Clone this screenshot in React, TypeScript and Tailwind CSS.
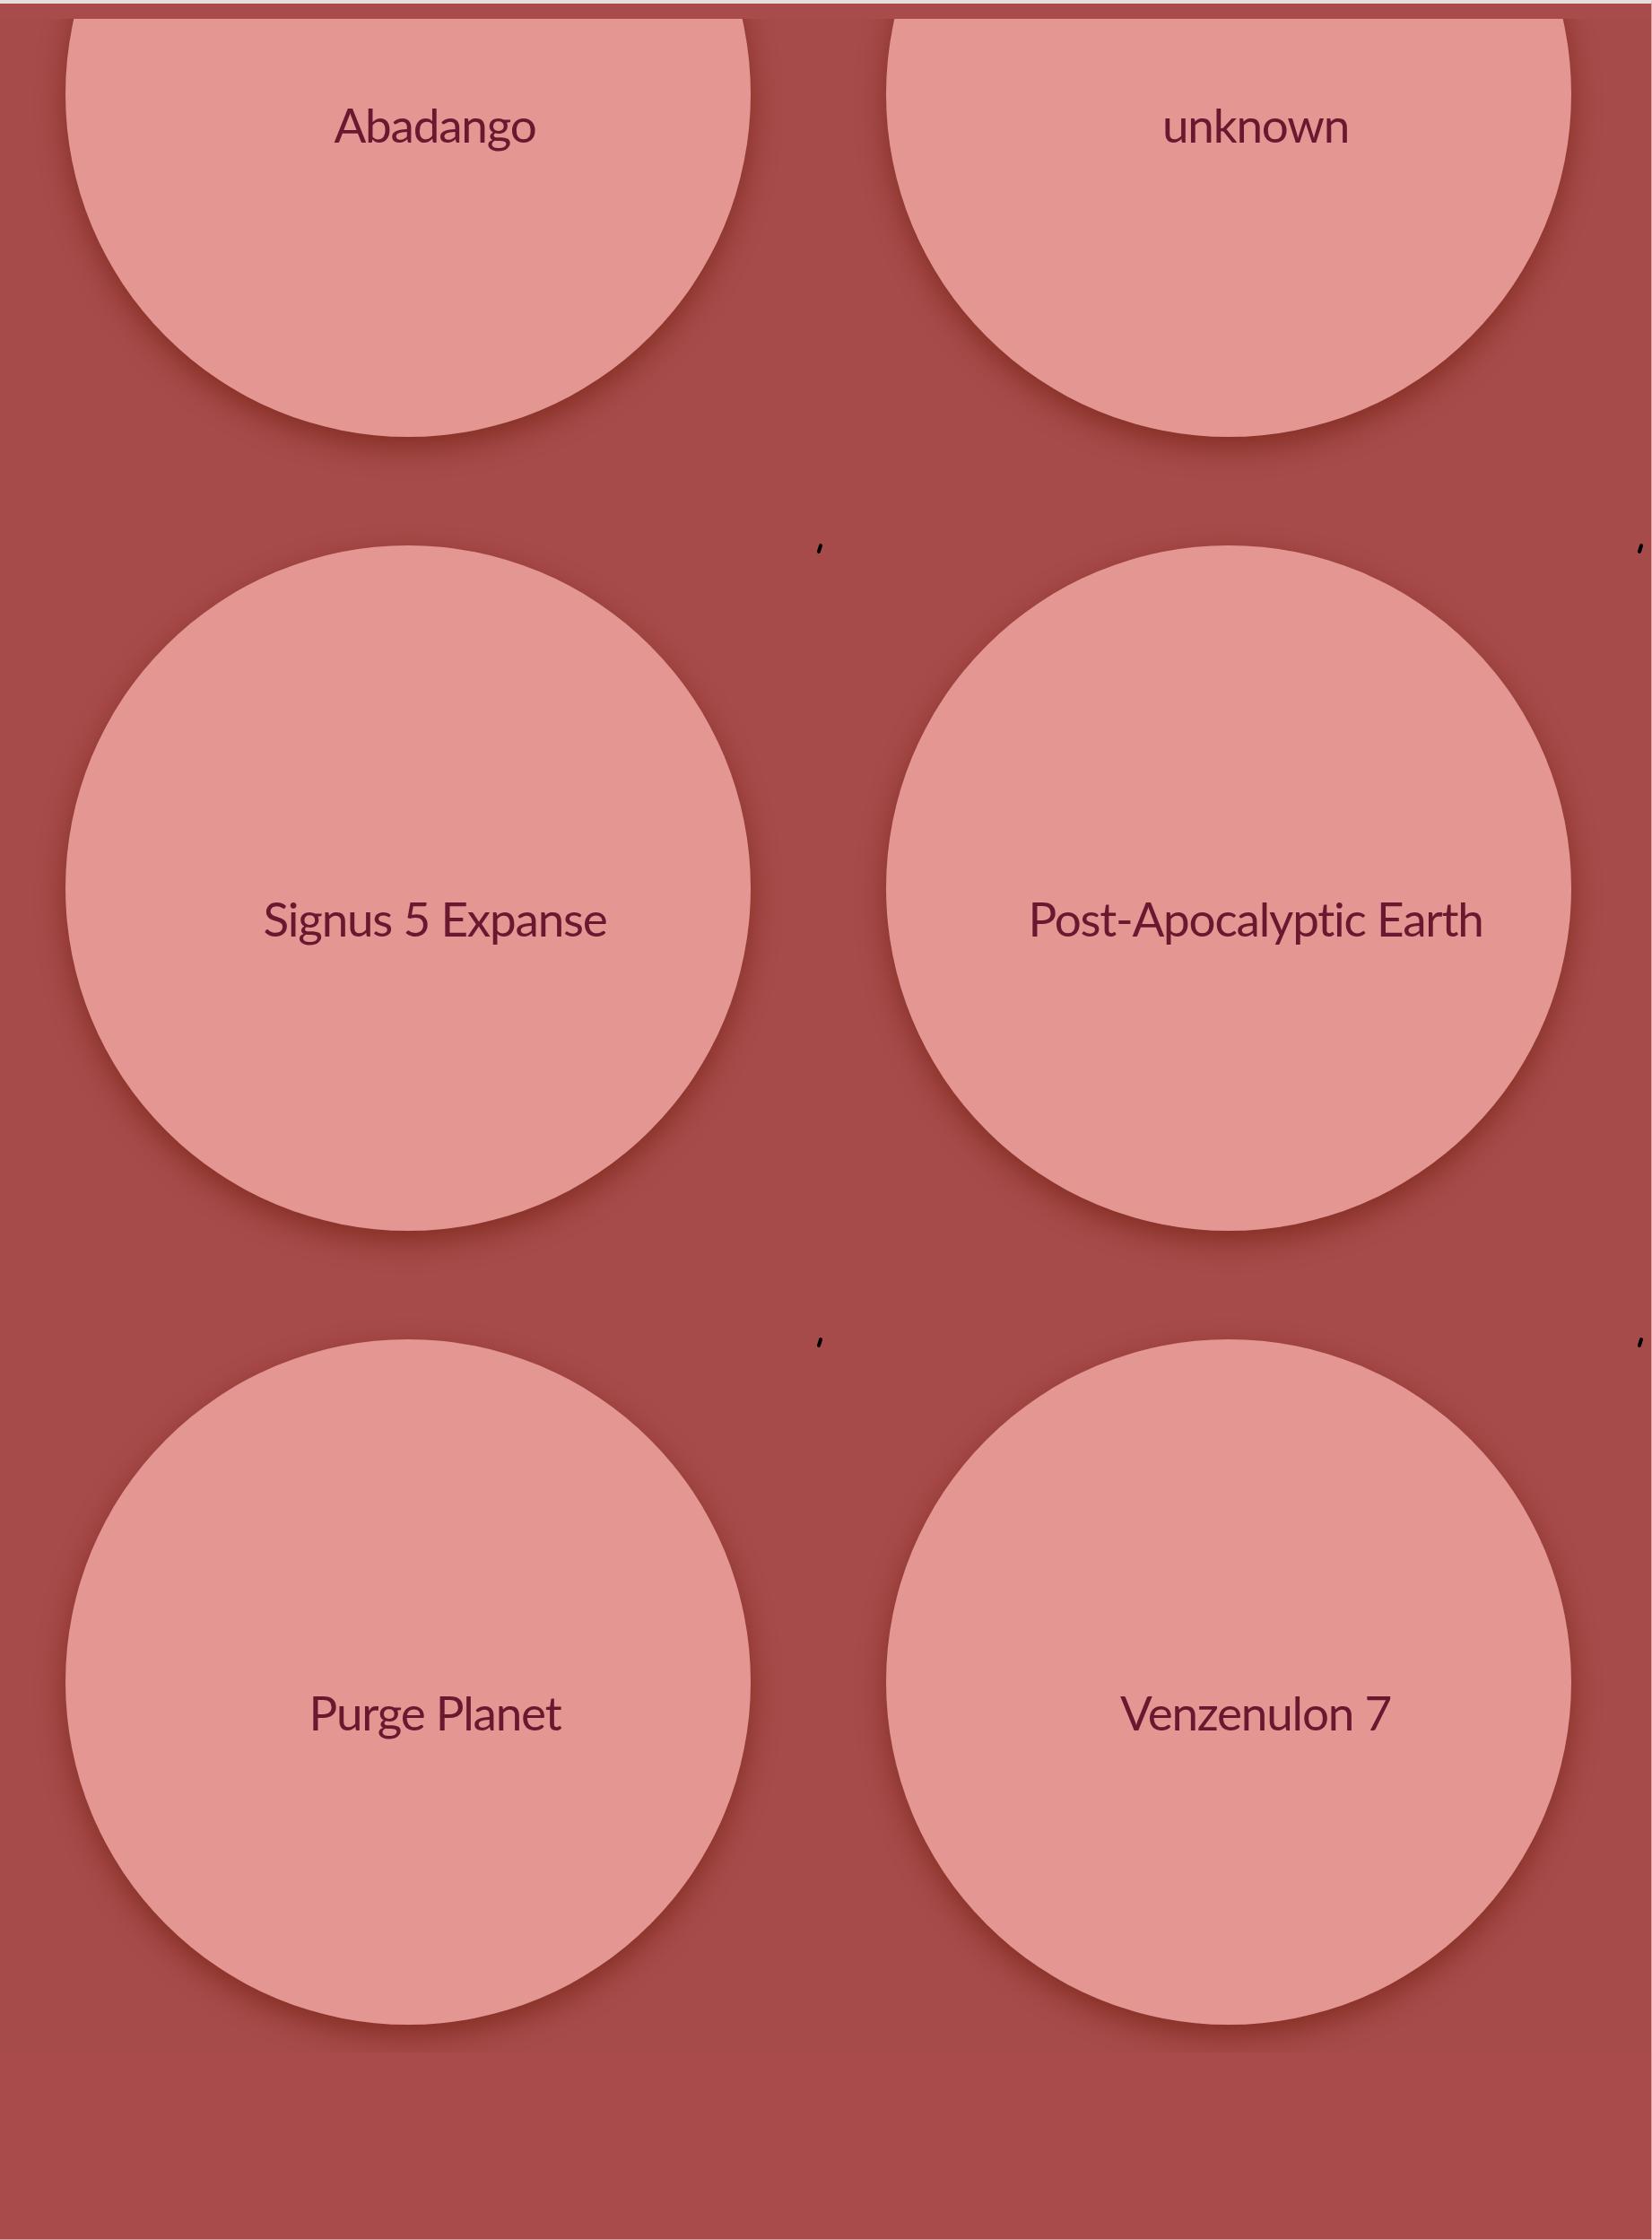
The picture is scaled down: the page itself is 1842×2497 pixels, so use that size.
import React from "react";

const rows: [string, string][] = [
  ["Abadango", "unknown"],
  ["Signus 5 Expanse", "Post-Apocalyptic Earth"],
  ["Purge Planet", "Venzenulon 7"],
];

function Planet({ name }: { name: string }) {
  return (
    <div className="relative">
      <div className="absolute left-[839px] top-[-2px] w-[4px] h-[11px] bg-black rounded-full rotate-[18deg]" />
      <div className="w-[764px] h-[764px] rounded-full bg-[#e49693] shadow-[0_12px_30px_rgba(110,30,10,0.6)] flex items-center justify-center pl-[60px] pt-[66px]">
        <span className="text-[#6a1730] text-[53px] leading-none tracking-[-1.2px] [font-family:Lato,'Open_Sans',sans-serif]">
          {name}
        </span>
      </div>
    </div>
  );
}

export default function App() {
  return (
    <div className="w-[1842px] h-[2497px] bg-[#a94b4b] border-t-4 border-t-[#e6dede] border-r border-r-[#dca3a3] border-b border-b-[#dca3a3] pt-[17px] box-border">
      <div className="h-[2267px] overflow-hidden bg-[#a74a4a]">
        <div className="mt-[-298px] pl-[73px] grid grid-cols-[764px_764px] gap-x-[151px] gap-y-[121px]">
          {rows.flat().map((n) => (
            <Planet key={n} name={n} />
          ))}
        </div>
      </div>
    </div>
  );
}
